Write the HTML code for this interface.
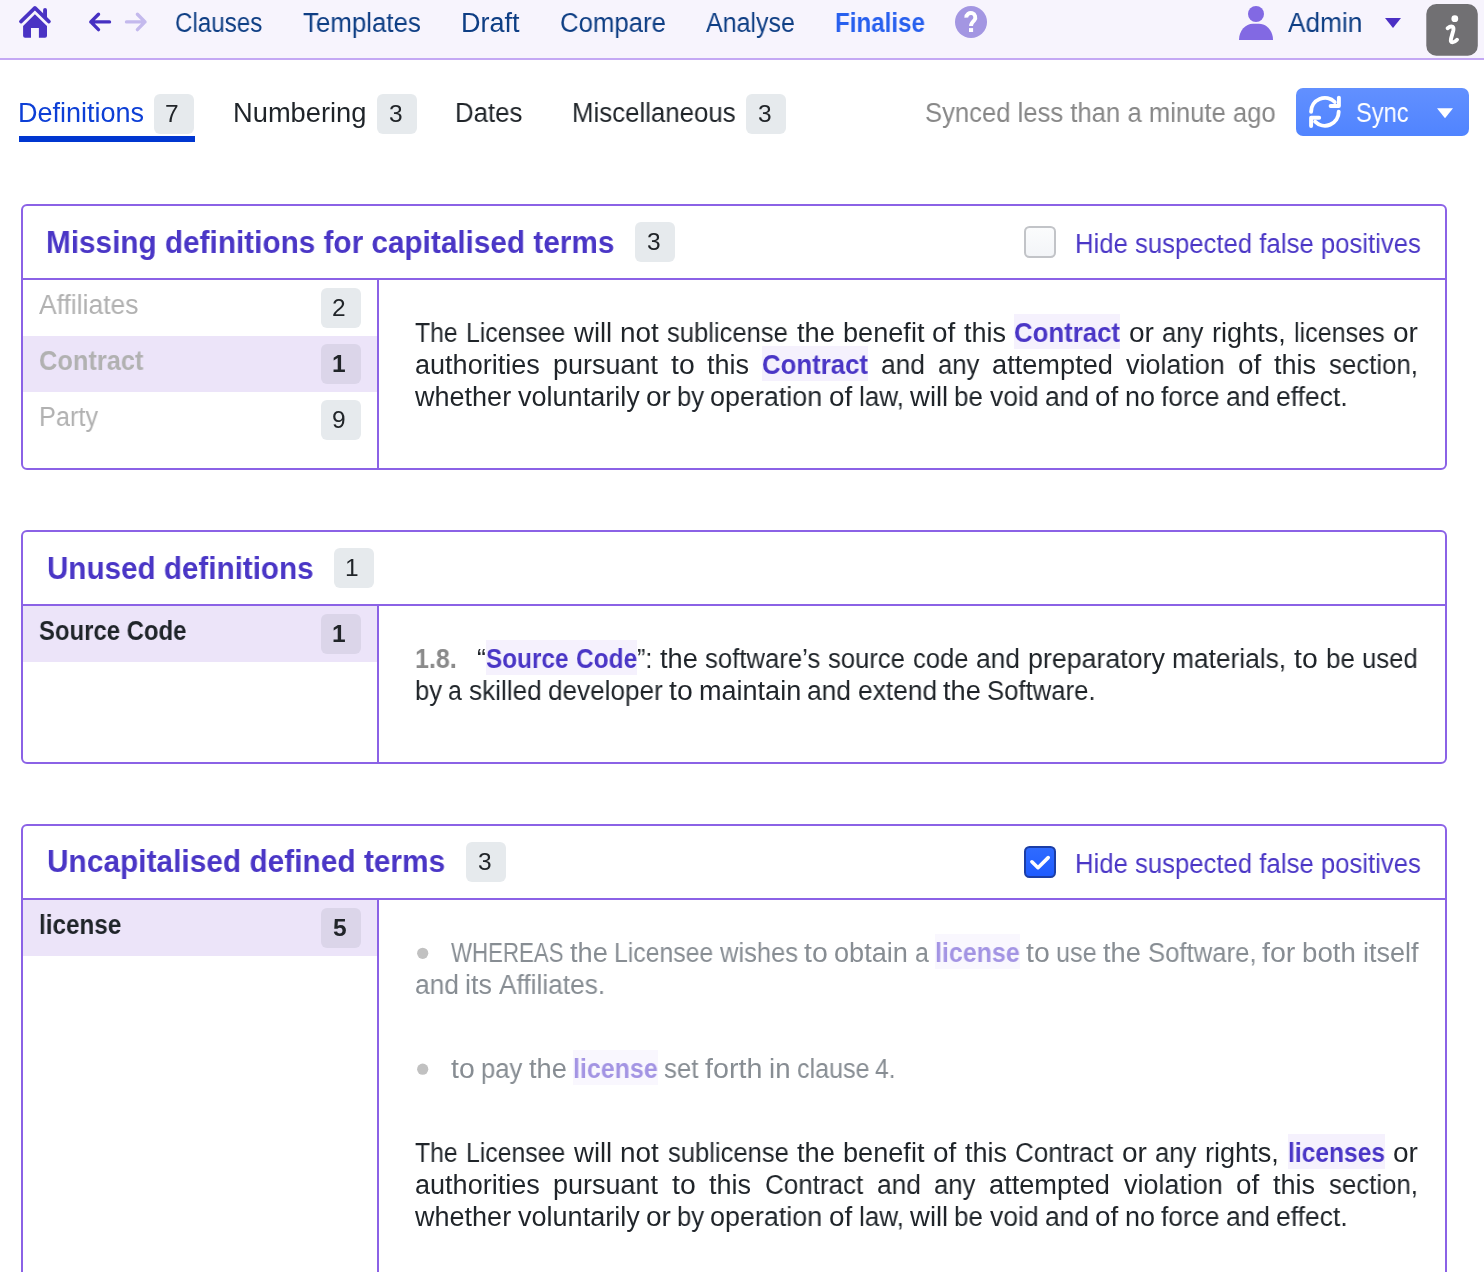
<!DOCTYPE html>
<html><head><meta charset="utf-8">
<style>
html,body{margin:0;padding:0;background:#fff;width:1484px;height:1272px;overflow:hidden;position:relative;font-family:"Liberation Sans",sans-serif;}
.a{position:absolute;box-sizing:border-box}
.t{position:absolute;white-space:nowrap;transform-origin:0 0;will-change:transform;}
.jl,.nl{position:absolute;white-space:nowrap;transform-origin:0 0;font-size:27px;line-height:30px;}
.jl{text-align:justify;text-align-last:justify;}
.hl,.hl2{display:inline-block;white-space:nowrap;padding:4px 0 1px 0;margin:-4px 0 -1px 0;vertical-align:baseline;text-align:left;text-align-last:left}
.in{display:inline-block;transform-origin:0 0;}
.hl{font-weight:700;color:#4a36c6;background:#f5f1fd;}
.hl2{font-weight:700;color:#a394e3;background:#f9f7fe;}
.num{font-weight:700;color:#8a8a8a}
.sp{display:inline-block;width:20px}
.badge{position:absolute;width:40px;height:40px;border-radius:6px;background:#e6eaed}
.badge.sel{background:#dbd5e9}
.box{position:absolute;border:2px solid #8b62e6;border-radius:6px;box-sizing:border-box}
.hline{position:absolute;height:2px;background:#8b62e6}
.vline{position:absolute;width:2px;background:#8b62e6}
.selrow{position:absolute;background:#ece4f9}
</style></head>
<body>
<!-- navbar -->
<div class="a" style="left:0;top:0;width:1484px;height:58px;background:#f7f4fd"></div>
<div class="a" style="left:0;top:58px;width:1484px;height:2px;background:#c4a8f4"></div>
<svg class="a" style="left:0;top:0" width="1484" height="60" viewBox="0 0 1484 60">
  <!-- home -->
  <g fill="#4a33c4">
    <path d="M20.9 21.6 L34.9 7.9 L49 21.6" fill="none" stroke="#4a33c4" stroke-width="3.6" stroke-linecap="round" stroke-linejoin="round"/>
    <path d="M43.1 15 L43.1 10 Q43.1 8 45.05 8 Q47 8 47 10 L47 18.5 Z"/>
    <path d="M23.1 25.9 L34.9 14.3 L47 25.9 L47 35.8 Q47 37.8 45 37.8 L38.9 37.8 L38.9 27.9 L31 27.9 L31 37.8 L25.1 37.8 Q23.1 37.8 23.1 35.8 Z"/>
  </g>
  <!-- arrows -->
  <path d="M109.5 21.9 L90.8 21.9 M98.5 14.2 L90.8 21.9 L98.5 29.6" fill="none" stroke="#4630c2" stroke-width="3.4" stroke-linecap="round" stroke-linejoin="round"/>
  <path d="M126.5 21.9 L145 21.9 M137.4 14.2 L145 21.9 L137.4 29.6" fill="none" stroke="#c4b9ed" stroke-width="3.4" stroke-linecap="round" stroke-linejoin="round"/>
  <!-- help -->
  <circle cx="971" cy="22" r="16" fill="#a396e2"/>
  <path d="M966.3 17.6 A4.5 4.5 0 1 1 974.4 20.2 Q971 23.5 971 26" fill="none" stroke="#fff" stroke-width="3.9"/>
  <rect x="969" y="28.1" width="4.1" height="3.9" fill="#fff"/>
  <!-- person -->
  <circle cx="1256" cy="14" r="8" fill="#8269e3"/>
  <path d="M1239 40 C1239 30.5 1245.5 23.7 1253 23.7 L1259 23.7 C1266.5 23.7 1273 30.5 1273 40 Z" fill="#8269e3"/>
  <!-- caret -->
  <path d="M1385 18 L1401 18 L1393 28 Z" fill="#4b2fc4"/>
  <!-- info button -->
  <rect x="1426.3" y="4" width="51.5" height="51.8" rx="10" fill="#717073"/>
  <circle cx="1454.8" cy="18.7" r="3.4" fill="#fff"/>
  <path d="M1447.6 28.2 Q1450.5 25.8 1452.6 26.8 Q1453.9 27.8 1453.3 30.5 L1451 38.8 Q1450.3 42.3 1452.5 42.4 Q1454.6 42.4 1457 39.8" fill="none" stroke="#fff" stroke-width="3.9" stroke-linecap="round" stroke-linejoin="round"/>
</svg>


<!-- tabs -->
<div class="a" style="left:19px;top:136px;width:176px;height:6px;background:#0036d0"></div>
<div class="badge" style="left:154px;top:94px"></div>
<div class="badge" style="left:377px;top:94px"></div>
<div class="badge" style="left:746px;top:94px"></div>
<div class="a" style="left:1296px;top:88px;width:173px;height:48px;border-radius:7px;background:linear-gradient(#6290ff,#5084ff)"></div>
<svg class="a" style="left:1296px;top:88px" width="173" height="48" viewBox="1296 88 173 48">
  <path d="M1311.1 111.8 A13.8 13.8 0 0 1 1334.7 102" fill="none" stroke="#fff" stroke-width="3.9" stroke-linecap="round"/>
  <path d="M1338.9 97.6 L1338.9 106 L1330.6 106" fill="none" stroke="#fff" stroke-width="3.9" stroke-linecap="round" stroke-linejoin="round"/>
  <path d="M1338.7 111.8 A13.8 13.8 0 0 1 1315.1 121.6" fill="none" stroke="#fff" stroke-width="3.9" stroke-linecap="round"/>
  <path d="M1311.1 126 L1311.1 117.8 L1319.2 117.8" fill="none" stroke="#fff" stroke-width="3.9" stroke-linecap="round" stroke-linejoin="round"/>
  <path d="M1437 108.2 L1453 108.2 L1445 118.2 Z" fill="#fff"/>
</svg>

<!-- section 1 -->
<div class="box" style="left:21px;top:204px;width:1426px;height:266px"></div>
<div class="hline" style="left:23px;top:278px;width:1422px"></div>
<div class="vline" style="left:377px;top:280px;height:188px"></div>
<div class="selrow" style="left:23px;top:336px;width:354px;height:56px"></div>
<div class="badge" style="left:635px;top:222px"></div>
<div class="badge" style="left:321px;top:288px"></div>
<div class="badge sel" style="left:321px;top:344px"></div>
<div class="badge" style="left:321px;top:400px"></div>
<div class="a" style="left:1024px;top:226px;width:32px;height:32px;border:2px solid #c2c4c8;border-radius:5.5px;background:linear-gradient(#fbfcfd,#f3f5f8)"></div>

<!-- section 2 -->
<div class="box" style="left:21px;top:530px;width:1426px;height:234px"></div>
<div class="hline" style="left:23px;top:604px;width:1422px"></div>
<div class="vline" style="left:377px;top:606px;height:156px"></div>
<div class="selrow" style="left:23px;top:606px;width:354px;height:56px"></div>
<div class="badge" style="left:334px;top:548px"></div>
<div class="badge sel" style="left:321px;top:614px"></div>

<!-- section 3 -->
<div class="box" style="left:21px;top:824px;width:1426px;height:600px"></div>
<div class="hline" style="left:23px;top:898px;width:1422px"></div>
<div class="vline" style="left:377px;top:900px;height:400px"></div>
<div class="selrow" style="left:23px;top:900px;width:354px;height:56px"></div>
<div class="badge" style="left:466px;top:842px"></div>
<div class="badge sel" style="left:321px;top:908px"></div>
<div class="a" style="left:1024px;top:846px;width:32px;height:32px;border:2px solid #1b3ea6;border-radius:5.5px;background:linear-gradient(#2f6bff,#1f5cff)"></div>
<svg class="a" style="left:1024px;top:846px" width="32" height="32" viewBox="1024 846 32 32">
  <path d="M1031.9 861.8 L1038 867.7 L1048.2 857.6" fill="none" stroke="#fff" stroke-width="3.6" stroke-linecap="round" stroke-linejoin="round"/>
</svg>
<svg class="a" style="left:410px;top:940px" width="30" height="140" viewBox="410 940 30 140">
  <circle cx="422.7" cy="953.3" r="5.6" fill="#c1c1c1"/>
  <circle cx="422.7" cy="1069.2" r="5.6" fill="#c1c1c1"/>
</svg>

<div class="t" style="left:175.10px;top:8.00px;font-size:27px;line-height:30px;font-weight:400;color:#0e3e84;transform:scaleX(0.8954)">Clauses</div>
<div class="t" style="left:303.00px;top:8.00px;font-size:27px;line-height:30px;font-weight:400;color:#0e3e84;transform:scaleX(0.9579)">Templates</div>
<div class="t" style="left:461.00px;top:8.00px;font-size:27px;line-height:30px;font-weight:400;color:#0e3e84;transform:scaleX(0.9999)">Draft</div>
<div class="t" style="left:560.05px;top:8.00px;font-size:27px;line-height:30px;font-weight:400;color:#0e3e84;transform:scaleX(0.9539)">Compare</div>
<div class="t" style="left:706.00px;top:8.00px;font-size:27px;line-height:30px;font-weight:400;color:#0e3e84;transform:scaleX(0.9259)">Analyse</div>
<div class="t" style="left:835.11px;top:8.00px;font-size:27px;line-height:30px;font-weight:700;color:#2860ee;transform:scaleX(0.8943)">Finalise</div>
<div class="t" style="left:1288.00px;top:8.00px;font-size:27px;line-height:30px;font-weight:400;color:#0e3e84;transform:scaleX(0.9720)">Admin</div>
<div class="t" style="left:18.00px;top:98.40px;font-size:27px;line-height:30px;font-weight:400;color:#0d3fd6;transform:scaleX(0.9995)">Definitions</div>
<div class="t" style="left:232.98px;top:98.40px;font-size:27px;line-height:30px;font-weight:400;color:#1f2429;transform:scaleX(1.0105)">Numbering</div>
<div class="t" style="left:455.09px;top:98.40px;font-size:27px;line-height:30px;font-weight:400;color:#1f2429;transform:scaleX(0.9554)">Dates</div>
<div class="t" style="left:571.79px;top:98.40px;font-size:27px;line-height:30px;font-weight:400;color:#1f2429;transform:scaleX(0.9568)">Miscellaneous</div>
<div class="t" style="left:925.05px;top:98.40px;font-size:27px;line-height:30px;font-weight:400;color:#878787;transform:scaleX(0.9496)">Synced less than a minute ago</div>
<div class="t" style="left:1355.82px;top:98.20px;font-size:27px;line-height:30px;font-weight:400;color:#ffffff;transform:scaleX(0.8765)">Sync</div>
<div class="t" style="left:46.14px;top:224.00px;font-size:32px;line-height:36px;font-weight:700;color:#4a36c6;transform:scaleX(0.9291)">Missing definitions for capitalised terms</div>
<div class="t" style="left:1074.70px;top:228.70px;font-size:27px;line-height:30px;font-weight:400;color:#4a36c6;transform:scaleX(0.9521)">Hide suspected false positives</div>
<div class="t" style="left:47.37px;top:549.80px;font-size:32px;line-height:36px;font-weight:700;color:#4a36c6;transform:scaleX(0.9256)">Unused definitions</div>
<div class="t" style="left:47.07px;top:843.00px;font-size:32px;line-height:36px;font-weight:700;color:#4a36c6;transform:scaleX(0.9330)">Uncapitalised defined terms</div>
<div class="t" style="left:1074.70px;top:848.70px;font-size:27px;line-height:30px;font-weight:400;color:#4a36c6;transform:scaleX(0.9521)">Hide suspected false positives</div>
<div class="t" style="left:39.00px;top:290.00px;font-size:27px;line-height:30px;font-weight:400;color:#b1b1b1;transform:scaleX(0.9797)">Affiliates</div>
<div class="t" style="left:38.56px;top:346.40px;font-size:27px;line-height:30px;font-weight:700;color:#b1b1b1;transform:scaleX(0.9408)">Contract</div>
<div class="t" style="left:39.12px;top:402.00px;font-size:27px;line-height:30px;font-weight:400;color:#b1b1b1;transform:scaleX(0.9379)">Party</div>
<div class="t" style="left:39.10px;top:616.00px;font-size:27px;line-height:30px;font-weight:700;color:#1f2429;transform:scaleX(0.8852)">Source Code</div>
<div class="t" style="left:39.10px;top:910.00px;font-size:27px;line-height:30px;font-weight:700;color:#1f2429;transform:scaleX(0.8990)">license</div>
<div class="t" style="left:165.30px;top:100.40px;font-size:24.5px;line-height:27px;font-weight:400;color:#212529;transform:scaleX(1.0000)">7</div>
<div class="t" style="left:388.80px;top:100.40px;font-size:24.5px;line-height:27px;font-weight:400;color:#212529;transform:scaleX(1.0000)">3</div>
<div class="t" style="left:757.80px;top:100.40px;font-size:24.5px;line-height:27px;font-weight:400;color:#212529;transform:scaleX(1.0000)">3</div>
<div class="t" style="left:646.80px;top:228.40px;font-size:24.5px;line-height:27px;font-weight:400;color:#212529;transform:scaleX(1.0000)">3</div>
<div class="t" style="left:332.30px;top:294.40px;font-size:24.5px;line-height:27px;font-weight:400;color:#212529;transform:scaleX(1.0000)">2</div>
<div class="t" style="left:332.30px;top:350.40px;font-size:24.5px;line-height:27px;font-weight:700;color:#212529;transform:scaleX(1.0000)">1</div>
<div class="t" style="left:332.30px;top:406.40px;font-size:24.5px;line-height:27px;font-weight:400;color:#212529;transform:scaleX(1.0000)">9</div>
<div class="t" style="left:345.30px;top:554.40px;font-size:24.5px;line-height:27px;font-weight:400;color:#212529;transform:scaleX(1.0000)">1</div>
<div class="t" style="left:332.30px;top:620.40px;font-size:24.5px;line-height:27px;font-weight:700;color:#212529;transform:scaleX(1.0000)">1</div>
<div class="t" style="left:477.80px;top:848.40px;font-size:24.5px;line-height:27px;font-weight:400;color:#212529;transform:scaleX(1.0000)">3</div>
<div class="t" style="left:332.80px;top:914.40px;font-size:24.5px;line-height:27px;font-weight:700;color:#212529;transform:scaleX(1.0000)">5</div>
<div class="a" style="left:1014.47px;top:314.0px;width:106.02px;height:35px;background:#f5f1fd"></div>
<div class="a" style="left:762.17px;top:346px;width:106.02px;height:35px;background:#f5f1fd"></div>
<div class="t" style="left:415.00px;top:318.0px;font-size:27px;line-height:30px;font-weight:400;color:#1f2429;transform:scaleX(0.9155)">The</div>
<div class="t" style="left:465.94px;top:318.0px;font-size:27px;line-height:30px;font-weight:400;color:#1f2429;transform:scaleX(0.9185)">Licensee</div>
<div class="t" style="left:573.53px;top:318.0px;font-size:27px;line-height:30px;font-weight:400;color:#1f2429;transform:scaleX(1.0197)">will</div>
<div class="t" style="left:620.11px;top:318.0px;font-size:27px;line-height:30px;font-weight:400;color:#1f2429;transform:scaleX(1.0345)">not</div>
<div class="t" style="left:667.28px;top:318.0px;font-size:27px;line-height:30px;font-weight:400;color:#1f2429;transform:scaleX(0.9475)">sublicense</div>
<div class="t" style="left:796.50px;top:318.0px;font-size:27px;line-height:30px;font-weight:400;color:#1f2429;transform:scaleX(1.0074)">the</div>
<div class="t" style="left:842.66px;top:318.0px;font-size:27px;line-height:30px;font-weight:400;color:#1f2429;transform:scaleX(1.0048)">benefit</div>
<div class="t" style="left:932.45px;top:318.0px;font-size:27px;line-height:30px;font-weight:400;color:#1f2429;transform:scaleX(1.0332)">of</div>
<div class="t" style="left:964.06px;top:318.0px;font-size:27px;line-height:30px;font-weight:400;color:#1f2429;transform:scaleX(1.0011)">this</div>
<div class="t" style="left:1014.47px;top:318.0px;font-size:27px;line-height:30px;font-weight:700;color:#4a36c6;transform:scaleX(0.9550)">Contract</div>
<div class="t" style="left:1128.83px;top:318.0px;font-size:27px;line-height:30px;font-weight:400;color:#1f2429;transform:scaleX(1.0400)">or</div>
<div class="t" style="left:1162.14px;top:318.0px;font-size:27px;line-height:30px;font-weight:400;color:#1f2429;transform:scaleX(0.9508)">any</div>
<div class="t" style="left:1211.88px;top:318.0px;font-size:27px;line-height:30px;font-weight:400;color:#1f2429;transform:scaleX(1.0039)">rights,</div>
<div class="t" style="left:1294.02px;top:318.0px;font-size:27px;line-height:30px;font-weight:400;color:#1f2429;transform:scaleX(0.9295)">licenses</div>
<div class="t" style="left:1393.03px;top:318.0px;font-size:27px;line-height:30px;font-weight:400;color:#1f2429;transform:scaleX(1.0394)">or</div>
<div class="t" style="left:415.00px;top:350px;font-size:27px;line-height:30px;font-weight:400;color:#1f2429;transform:scaleX(1.0023)">authorities</div>
<div class="t" style="left:552.77px;top:350px;font-size:27px;line-height:30px;font-weight:400;color:#1f2429;transform:scaleX(0.9987)">pursuant</div>
<div class="t" style="left:670.61px;top:350px;font-size:27px;line-height:30px;font-weight:400;color:#1f2429;transform:scaleX(1.0520)">to</div>
<div class="t" style="left:707.20px;top:350px;font-size:27px;line-height:30px;font-weight:400;color:#1f2429;transform:scaleX(1.0007)">this</div>
<div class="t" style="left:762.17px;top:350px;font-size:27px;line-height:30px;font-weight:700;color:#4a36c6;transform:scaleX(0.9550)">Contract</div>
<div class="t" style="left:881.09px;top:350px;font-size:27px;line-height:30px;font-weight:400;color:#1f2429;transform:scaleX(0.9760)">and</div>
<div class="t" style="left:937.97px;top:350px;font-size:27px;line-height:30px;font-weight:400;color:#1f2429;transform:scaleX(0.9508)">any</div>
<div class="t" style="left:992.27px;top:350px;font-size:27px;line-height:30px;font-weight:400;color:#1f2429;transform:scaleX(1.0074)">attempted</div>
<div class="t" style="left:1126.14px;top:350px;font-size:27px;line-height:30px;font-weight:400;color:#1f2429;transform:scaleX(0.9973)">violation</div>
<div class="t" style="left:1237.84px;top:350px;font-size:27px;line-height:30px;font-weight:400;color:#1f2429;transform:scaleX(1.0332)">of</div>
<div class="t" style="left:1274.02px;top:350px;font-size:27px;line-height:30px;font-weight:400;color:#1f2429;transform:scaleX(1.0007)">this</div>
<div class="t" style="left:1328.97px;top:350px;font-size:27px;line-height:30px;font-weight:400;color:#1f2429;transform:scaleX(0.9568)">section,</div>
<div class="t" style="left:415.00px;top:382px;font-size:27px;line-height:30px;font-weight:400;color:#1f2429;transform:scaleX(1.0009)">whether</div>
<div class="t" style="left:517.50px;top:382px;font-size:27px;line-height:30px;font-weight:400;color:#1f2429;transform:scaleX(1.0015)">voluntarily</div>
<div class="t" style="left:645.58px;top:382px;font-size:27px;line-height:30px;font-weight:400;color:#1f2429;transform:scaleX(1.0400)">or</div>
<div class="t" style="left:676.89px;top:382px;font-size:27px;line-height:30px;font-weight:400;color:#1f2429;transform:scaleX(0.9501)">by</div>
<div class="t" style="left:710.34px;top:382px;font-size:27px;line-height:30px;font-weight:400;color:#1f2429;transform:scaleX(0.9967)">operation</div>
<div class="t" style="left:828.92px;top:382px;font-size:27px;line-height:30px;font-weight:400;color:#1f2429;transform:scaleX(1.0332)">of</div>
<div class="t" style="left:858.53px;top:382px;font-size:27px;line-height:30px;font-weight:400;color:#1f2429;transform:scaleX(0.9659)">law,</div>
<div class="t" style="left:909.81px;top:382px;font-size:27px;line-height:30px;font-weight:400;color:#1f2429;transform:scaleX(1.0197)">will</div>
<div class="t" style="left:954.41px;top:382px;font-size:27px;line-height:30px;font-weight:400;color:#1f2429;transform:scaleX(0.9625)">be</div>
<div class="t" style="left:989.66px;top:382px;font-size:27px;line-height:30px;font-weight:400;color:#1f2429;transform:scaleX(0.9827)">void</div>
<div class="t" style="left:1044.69px;top:382px;font-size:27px;line-height:30px;font-weight:400;color:#1f2429;transform:scaleX(0.9760)">and</div>
<div class="t" style="left:1095.02px;top:382px;font-size:27px;line-height:30px;font-weight:400;color:#1f2429;transform:scaleX(1.0332)">of</div>
<div class="t" style="left:1124.62px;top:382px;font-size:27px;line-height:30px;font-weight:400;color:#1f2429;transform:scaleX(0.9984)">no</div>
<div class="t" style="left:1160.97px;top:382px;font-size:27px;line-height:30px;font-weight:400;color:#1f2429;transform:scaleX(0.9741)">force</div>
<div class="t" style="left:1225.80px;top:382px;font-size:27px;line-height:30px;font-weight:400;color:#1f2429;transform:scaleX(0.9760)">and</div>
<div class="t" style="left:1276.11px;top:382px;font-size:27px;line-height:30px;font-weight:400;color:#1f2429;transform:scaleX(0.9813)">effect.</div>
<div class="a" style="left:485.59px;top:640.0px;width:151.31px;height:35px;background:#f5f1fd"></div>
<div class="t" style="left:415.00px;top:644.0px;font-size:27px;line-height:30px;font-weight:700;color:#8a8a8a;transform:scaleX(0.9281)">1.8.</div>
<div class="t" style="left:476.80px;top:644.0px;font-size:27px;line-height:30px;font-weight:400;color:#1f2429;transform:scaleX(0.9784)">“</div>
<div class="t" style="left:485.59px;top:644.0px;font-size:27px;line-height:30px;font-weight:700;color:#4a36c6;transform:scaleX(0.9010)">Source</div>
<div class="t" style="left:575.73px;top:644.0px;font-size:27px;line-height:30px;font-weight:700;color:#4a36c6;transform:scaleX(0.9062)">Code</div>
<div class="t" style="left:636.91px;top:644.0px;font-size:27px;line-height:30px;font-weight:400;color:#1f2429;transform:scaleX(0.9322)">”:</div>
<div class="t" style="left:659.94px;top:644.0px;font-size:27px;line-height:30px;font-weight:400;color:#1f2429;transform:scaleX(1.0078)">the</div>
<div class="t" style="left:705.44px;top:644.0px;font-size:27px;line-height:30px;font-weight:400;color:#1f2429;transform:scaleX(0.9527)">software’s</div>
<div class="t" style="left:828.44px;top:644.0px;font-size:27px;line-height:30px;font-weight:400;color:#1f2429;transform:scaleX(0.9492)">source</div>
<div class="t" style="left:913.03px;top:644.0px;font-size:27px;line-height:30px;font-weight:400;color:#1f2429;transform:scaleX(0.9477)">code</div>
<div class="t" style="left:976.19px;top:644.0px;font-size:27px;line-height:30px;font-weight:400;color:#1f2429;transform:scaleX(0.9760)">and</div>
<div class="t" style="left:1027.83px;top:644.0px;font-size:27px;line-height:30px;font-weight:400;color:#1f2429;transform:scaleX(0.9921)">preparatory</div>
<div class="t" style="left:1172.48px;top:644.0px;font-size:27px;line-height:30px;font-weight:400;color:#1f2429;transform:scaleX(0.9753)">materials,</div>
<div class="t" style="left:1294.30px;top:644.0px;font-size:27px;line-height:30px;font-weight:400;color:#1f2429;transform:scaleX(1.0513)">to</div>
<div class="t" style="left:1325.64px;top:644.0px;font-size:27px;line-height:30px;font-weight:400;color:#1f2429;transform:scaleX(0.9625)">be</div>
<div class="t" style="left:1362.22px;top:644.0px;font-size:27px;line-height:30px;font-weight:400;color:#1f2429;transform:scaleX(0.9525)">used</div>
<div class="t" style="left:415.00px;top:676px;font-size:27px;line-height:30px;font-weight:400;color:#1f2429;transform:scaleX(0.9496)">by</div>
<div class="t" style="left:448.44px;top:676px;font-size:27px;line-height:30px;font-weight:400;color:#1f2429;transform:scaleX(0.9157)">a</div>
<div class="t" style="left:468.55px;top:676px;font-size:27px;line-height:30px;font-weight:400;color:#1f2429;transform:scaleX(0.9688)">skilled</div>
<div class="t" style="left:547.58px;top:676px;font-size:27px;line-height:30px;font-weight:400;color:#1f2429;transform:scaleX(0.9683)">developer</div>
<div class="t" style="left:668.77px;top:676px;font-size:27px;line-height:30px;font-weight:400;color:#1f2429;transform:scaleX(1.0513)">to</div>
<div class="t" style="left:698.80px;top:676px;font-size:27px;line-height:30px;font-weight:400;color:#1f2429;transform:scaleX(1.0013)">maintain</div>
<div class="t" style="left:807.33px;top:676px;font-size:27px;line-height:30px;font-weight:400;color:#1f2429;transform:scaleX(0.9760)">and</div>
<div class="t" style="left:857.66px;top:676px;font-size:27px;line-height:30px;font-weight:400;color:#1f2429;transform:scaleX(0.9766)">extend</div>
<div class="t" style="left:943.19px;top:676px;font-size:27px;line-height:30px;font-weight:400;color:#1f2429;transform:scaleX(1.0074)">the</div>
<div class="t" style="left:987.36px;top:676px;font-size:27px;line-height:30px;font-weight:400;color:#1f2429;transform:scaleX(0.9520)">Software.</div>
<div class="a" style="left:934.97px;top:934.0px;width:84.75px;height:35px;background:#f9f7fe"></div>
<div class="t" style="left:451.19px;top:938.0px;font-size:27px;line-height:30px;font-weight:400;color:#878d93;transform:scaleX(0.8243)">WHEREAS</div>
<div class="t" style="left:570.11px;top:938.0px;font-size:27px;line-height:30px;font-weight:400;color:#878d93;transform:scaleX(1.0078)">the</div>
<div class="t" style="left:614.33px;top:938.0px;font-size:27px;line-height:30px;font-weight:400;color:#878d93;transform:scaleX(0.9185)">Licensee</div>
<div class="t" style="left:719.98px;top:938.0px;font-size:27px;line-height:30px;font-weight:400;color:#878d93;transform:scaleX(0.9453)">wishes</div>
<div class="t" style="left:804.39px;top:938.0px;font-size:27px;line-height:30px;font-weight:400;color:#878d93;transform:scaleX(1.0520)">to</div>
<div class="t" style="left:834.47px;top:938.0px;font-size:27px;line-height:30px;font-weight:400;color:#878d93;transform:scaleX(1.0053)">obtain</div>
<div class="t" style="left:914.81px;top:938.0px;font-size:27px;line-height:30px;font-weight:400;color:#878d93;transform:scaleX(0.9157)">a</div>
<div class="t" style="left:934.97px;top:938.0px;font-size:27px;line-height:30px;font-weight:700;color:#a394e3;transform:scaleX(0.9256)">license</div>
<div class="t" style="left:1026.11px;top:938.0px;font-size:27px;line-height:30px;font-weight:400;color:#878d93;transform:scaleX(1.0520)">to</div>
<div class="t" style="left:1056.19px;top:938.0px;font-size:27px;line-height:30px;font-weight:400;color:#878d93;transform:scaleX(0.9354)">use</div>
<div class="t" style="left:1103.30px;top:938.0px;font-size:27px;line-height:30px;font-weight:400;color:#878d93;transform:scaleX(1.0074)">the</div>
<div class="t" style="left:1147.50px;top:938.0px;font-size:27px;line-height:30px;font-weight:400;color:#878d93;transform:scaleX(0.9520)">Software,</div>
<div class="t" style="left:1262.47px;top:938.0px;font-size:27px;line-height:30px;font-weight:400;color:#878d93;transform:scaleX(1.0592)">for</div>
<div class="t" style="left:1302.23px;top:938.0px;font-size:27px;line-height:30px;font-weight:400;color:#878d93;transform:scaleX(1.0255)">both</div>
<div class="t" style="left:1362.52px;top:938.0px;font-size:27px;line-height:30px;font-weight:400;color:#878d93;transform:scaleX(0.9994)">itself</div>
<div class="t" style="left:415.00px;top:970px;font-size:27px;line-height:30px;font-weight:400;color:#878d93;transform:scaleX(0.9757)">and</div>
<div class="t" style="left:465.31px;top:970px;font-size:27px;line-height:30px;font-weight:400;color:#878d93;transform:scaleX(0.9971)">its</div>
<div class="t" style="left:498.58px;top:970px;font-size:27px;line-height:30px;font-weight:400;color:#878d93;transform:scaleX(0.9739)">Affiliates.</div>
<div class="a" style="left:573.08px;top:1050.0px;width:84.75px;height:35px;background:#f9f7fe"></div>
<div class="t" style="left:451.19px;top:1054.0px;font-size:27px;line-height:30px;font-weight:400;color:#878d93;transform:scaleX(1.0513)">to</div>
<div class="t" style="left:481.22px;top:1054.0px;font-size:27px;line-height:30px;font-weight:400;color:#878d93;transform:scaleX(0.9490)">pay</div>
<div class="t" style="left:528.89px;top:1054.0px;font-size:27px;line-height:30px;font-weight:400;color:#878d93;transform:scaleX(1.0078)">the</div>
<div class="t" style="left:573.08px;top:1054.0px;font-size:27px;line-height:30px;font-weight:700;color:#a394e3;transform:scaleX(0.9256)">license</div>
<div class="t" style="left:664.19px;top:1054.0px;font-size:27px;line-height:30px;font-weight:400;color:#878d93;transform:scaleX(0.9557)">set</div>
<div class="t" style="left:704.95px;top:1054.0px;font-size:27px;line-height:30px;font-weight:400;color:#878d93;transform:scaleX(1.0620)">forth</div>
<div class="t" style="left:768.69px;top:1054.0px;font-size:27px;line-height:30px;font-weight:400;color:#878d93;transform:scaleX(1.0216)">in</div>
<div class="t" style="left:796.52px;top:1054.0px;font-size:27px;line-height:30px;font-weight:400;color:#878d93;transform:scaleX(0.9293)">clause</div>
<div class="t" style="left:875.41px;top:1054.0px;font-size:27px;line-height:30px;font-weight:400;color:#878d93;transform:scaleX(0.9146)">4.</div>
<div class="a" style="left:1287.55px;top:1134.0px;width:97.05px;height:35px;background:#f5f1fd"></div>
<div class="t" style="left:415.00px;top:1138.0px;font-size:27px;line-height:30px;font-weight:400;color:#1f2429;transform:scaleX(0.9155)">The</div>
<div class="t" style="left:466.03px;top:1138.0px;font-size:27px;line-height:30px;font-weight:400;color:#1f2429;transform:scaleX(0.9185)">Licensee</div>
<div class="t" style="left:573.73px;top:1138.0px;font-size:27px;line-height:30px;font-weight:400;color:#1f2429;transform:scaleX(1.0197)">will</div>
<div class="t" style="left:620.41px;top:1138.0px;font-size:27px;line-height:30px;font-weight:400;color:#1f2429;transform:scaleX(1.0345)">not</div>
<div class="t" style="left:667.67px;top:1138.0px;font-size:27px;line-height:30px;font-weight:400;color:#1f2429;transform:scaleX(0.9475)">sublicense</div>
<div class="t" style="left:796.98px;top:1138.0px;font-size:27px;line-height:30px;font-weight:400;color:#1f2429;transform:scaleX(1.0074)">the</div>
<div class="t" style="left:843.23px;top:1138.0px;font-size:27px;line-height:30px;font-weight:400;color:#1f2429;transform:scaleX(1.0048)">benefit</div>
<div class="t" style="left:933.12px;top:1138.0px;font-size:27px;line-height:30px;font-weight:400;color:#1f2429;transform:scaleX(1.0332)">of</div>
<div class="t" style="left:964.84px;top:1138.0px;font-size:27px;line-height:30px;font-weight:400;color:#1f2429;transform:scaleX(1.0007)">this</div>
<div class="t" style="left:1015.33px;top:1138.0px;font-size:27px;line-height:30px;font-weight:400;color:#1f2429;transform:scaleX(0.9633)">Contract</div>
<div class="t" style="left:1122.06px;top:1138.0px;font-size:27px;line-height:30px;font-weight:400;color:#1f2429;transform:scaleX(1.0394)">or</div>
<div class="t" style="left:1155.45px;top:1138.0px;font-size:27px;line-height:30px;font-weight:400;color:#1f2429;transform:scaleX(0.9508)">any</div>
<div class="t" style="left:1205.28px;top:1138.0px;font-size:27px;line-height:30px;font-weight:400;color:#1f2429;transform:scaleX(1.0039)">rights,</div>
<div class="t" style="left:1287.55px;top:1138.0px;font-size:27px;line-height:30px;font-weight:700;color:#4a36c6;transform:scaleX(0.9106)">licenses</div>
<div class="t" style="left:1393.05px;top:1138.0px;font-size:27px;line-height:30px;font-weight:400;color:#1f2429;transform:scaleX(1.0394)">or</div>
<div class="t" style="left:415.00px;top:1170px;font-size:27px;line-height:30px;font-weight:400;color:#1f2429;transform:scaleX(1.0023)">authorities</div>
<div class="t" style="left:553.47px;top:1170px;font-size:27px;line-height:30px;font-weight:400;color:#1f2429;transform:scaleX(0.9989)">pursuant</div>
<div class="t" style="left:672.02px;top:1170px;font-size:27px;line-height:30px;font-weight:400;color:#1f2429;transform:scaleX(1.0520)">to</div>
<div class="t" style="left:709.31px;top:1170px;font-size:27px;line-height:30px;font-weight:400;color:#1f2429;transform:scaleX(1.0011)">this</div>
<div class="t" style="left:764.98px;top:1170px;font-size:27px;line-height:30px;font-weight:400;color:#1f2429;transform:scaleX(0.9632)">Contract</div>
<div class="t" style="left:876.88px;top:1170px;font-size:27px;line-height:30px;font-weight:400;color:#1f2429;transform:scaleX(0.9760)">and</div>
<div class="t" style="left:934.44px;top:1170px;font-size:27px;line-height:30px;font-weight:400;color:#1f2429;transform:scaleX(0.9512)">any</div>
<div class="t" style="left:989.45px;top:1170px;font-size:27px;line-height:30px;font-weight:400;color:#1f2429;transform:scaleX(1.0074)">attempted</div>
<div class="t" style="left:1124.03px;top:1170px;font-size:27px;line-height:30px;font-weight:400;color:#1f2429;transform:scaleX(0.9973)">violation</div>
<div class="t" style="left:1236.44px;top:1170px;font-size:27px;line-height:30px;font-weight:400;color:#1f2429;transform:scaleX(1.0332)">of</div>
<div class="t" style="left:1273.31px;top:1170px;font-size:27px;line-height:30px;font-weight:400;color:#1f2429;transform:scaleX(1.0007)">this</div>
<div class="t" style="left:1328.97px;top:1170px;font-size:27px;line-height:30px;font-weight:400;color:#1f2429;transform:scaleX(0.9568)">section,</div>
<div class="t" style="left:415.00px;top:1202px;font-size:27px;line-height:30px;font-weight:400;color:#1f2429;transform:scaleX(1.0009)">whether</div>
<div class="t" style="left:517.50px;top:1202px;font-size:27px;line-height:30px;font-weight:400;color:#1f2429;transform:scaleX(1.0015)">voluntarily</div>
<div class="t" style="left:645.58px;top:1202px;font-size:27px;line-height:30px;font-weight:400;color:#1f2429;transform:scaleX(1.0400)">or</div>
<div class="t" style="left:676.89px;top:1202px;font-size:27px;line-height:30px;font-weight:400;color:#1f2429;transform:scaleX(0.9501)">by</div>
<div class="t" style="left:710.34px;top:1202px;font-size:27px;line-height:30px;font-weight:400;color:#1f2429;transform:scaleX(0.9967)">operation</div>
<div class="t" style="left:828.92px;top:1202px;font-size:27px;line-height:30px;font-weight:400;color:#1f2429;transform:scaleX(1.0332)">of</div>
<div class="t" style="left:858.53px;top:1202px;font-size:27px;line-height:30px;font-weight:400;color:#1f2429;transform:scaleX(0.9659)">law,</div>
<div class="t" style="left:909.81px;top:1202px;font-size:27px;line-height:30px;font-weight:400;color:#1f2429;transform:scaleX(1.0197)">will</div>
<div class="t" style="left:954.41px;top:1202px;font-size:27px;line-height:30px;font-weight:400;color:#1f2429;transform:scaleX(0.9625)">be</div>
<div class="t" style="left:989.66px;top:1202px;font-size:27px;line-height:30px;font-weight:400;color:#1f2429;transform:scaleX(0.9827)">void</div>
<div class="t" style="left:1044.69px;top:1202px;font-size:27px;line-height:30px;font-weight:400;color:#1f2429;transform:scaleX(0.9760)">and</div>
<div class="t" style="left:1095.02px;top:1202px;font-size:27px;line-height:30px;font-weight:400;color:#1f2429;transform:scaleX(1.0332)">of</div>
<div class="t" style="left:1124.62px;top:1202px;font-size:27px;line-height:30px;font-weight:400;color:#1f2429;transform:scaleX(0.9984)">no</div>
<div class="t" style="left:1160.97px;top:1202px;font-size:27px;line-height:30px;font-weight:400;color:#1f2429;transform:scaleX(0.9741)">force</div>
<div class="t" style="left:1225.80px;top:1202px;font-size:27px;line-height:30px;font-weight:400;color:#1f2429;transform:scaleX(0.9760)">and</div>
<div class="t" style="left:1276.11px;top:1202px;font-size:27px;line-height:30px;font-weight:400;color:#1f2429;transform:scaleX(0.9813)">effect.</div>
</body></html>
